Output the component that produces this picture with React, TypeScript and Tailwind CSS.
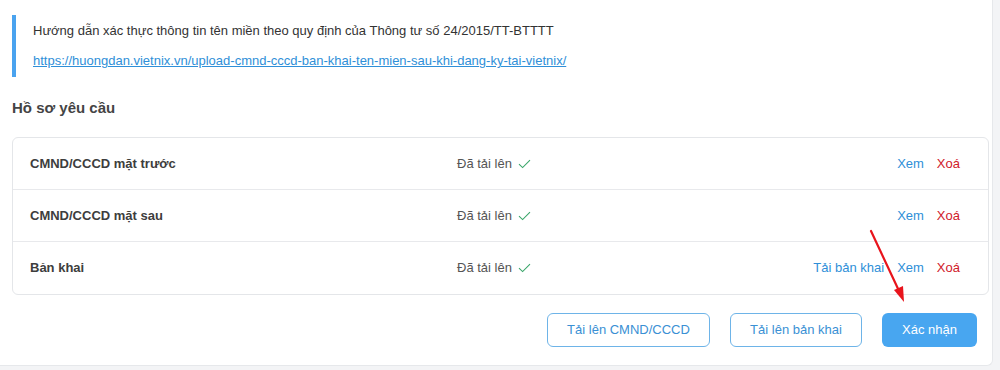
export default function App() {
  const rows = [
    { name: "CMND/CCCD mặt trước", extra: false },
    { name: "CMND/CCCD mặt sau", extra: false },
    { name: "Bản khai", extra: true },
  ];

  return (
    <div className="relative h-[370px] w-[1000px] bg-[#f3f4f6] font-['Liberation_Sans',Arial,sans-serif]">
      <div className="h-[366px] w-[993px] rounded-br-md border-r border-b border-[#e6e8eb] bg-white px-[12px] pt-[15px]">
        {/* huong dan */}
        <div className="border-l-[4px] border-[#4aa3ef] py-[1px] pl-[17px] text-[13px] leading-[30px] text-[#333]">
          <p>Hướng dẫn xác thực thông tin tên miền theo quy định của Thông tư số 24/2015/TT-BTTTT</p>
          <a href="#" className="text-[#2f8fd8] underline">
            https://huongdan.vietnix.vn/upload-cmnd-cccd-ban-khai-ten-mien-sau-khi-dang-ky-tai-vietnix/
          </a>
        </div>

        <h2 className="mt-[21px] text-[15px] leading-[20px] font-bold text-[#444]">Hồ sơ yêu cầu</h2>

        <div className="mt-[19px] w-[977px] rounded-md border border-[#e4e6e9]">
          {rows.map((r, i) => (
            <div
              key={i}
              className={
                "grid h-[52px] grid-cols-[427px_1fr_auto] items-center pr-[28px] pl-[17px] text-[13px] " +
                (i < rows.length - 1 ? "border-b border-[#e8e9ec]" : "")
              }
            >
              <span className="font-bold text-[#3d3d3d]">{r.name}</span>
              <span className="flex items-center gap-[6px] text-[#555]">
                Đã tải lên
                <svg width="13" height="10" viewBox="0 0 13 10" fill="none">
                  <path d="M1 5.2 L4.6 8.6 L12 1.2" stroke="#3aa66a" strokeWidth="1.1" />
                </svg>
              </span>
              <span className="flex items-center gap-[13px]">
                {r.extra && <a className="text-[#2f8fd8]">Tải bản khai</a>}
                <a className="text-[#2f8fd8]">Xem</a>
                <a className="text-[#d0202a]">Xoá</a>
              </span>
            </div>
          ))}
        </div>

        <div className="mt-[18px] flex w-[977px] justify-end gap-[20px] pr-[12px] text-[13px]">
          <button className="h-[34px] w-[163px] rounded-md border border-[#6eb4e8] text-[#3a90d4]">
            Tải lên CMND/CCCD
          </button>
          <button className="h-[34px] w-[132px] rounded-md border border-[#6eb4e8] text-[#3a90d4]">
            Tải lên bản khai
          </button>
          <button className="h-[34px] w-[95px] rounded-md bg-[#48a6f0] text-white">Xác nhận</button>
        </div>
      </div>

      {/* red arrow annotation */}
      <svg className="absolute top-0 left-0" width="1000" height="370" viewBox="0 0 1000 370" fill="none">
        <line x1="871" y1="231" x2="900" y2="293" stroke="#e8141c" strokeWidth="2.2" strokeLinecap="round" />
        <path d="M904 302 L894 290 L903 286 Z" fill="#e8141c" />
      </svg>
    </div>
  );
}
